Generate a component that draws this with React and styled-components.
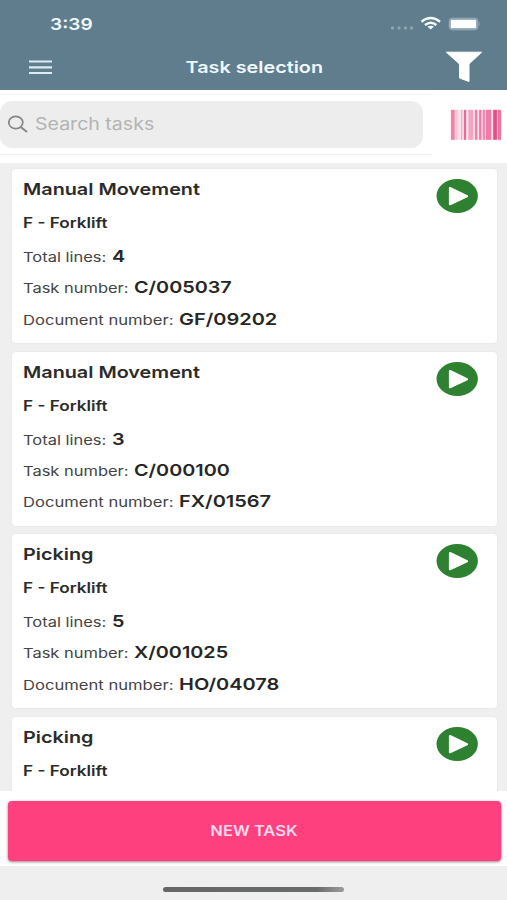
import React from "react";
import styled, { createGlobalStyle } from "styled-components";

const GlobalStyle = createGlobalStyle`
  * { box-sizing: border-box; }
  body { margin: 0; background: #efefef; font-family: Inter, "Liberation Sans", sans-serif; }
`;

const Screen = styled.div`
  width: 507px;
  height: 900px;
  display: flex;
  flex-direction: column;
  overflow: hidden;
  background: #efefef;
`;

/* Horizontally widened text */
const Wide = styled.span`
  display: inline-block;
  white-space: pre;
  transform: scaleX(${(p) => p.$x || 1.2});
  transform-origin: ${(p) => p.$origin || "left"} center;
`;

const Header = styled.header`
  height: 89.5px;
  flex: none;
  background: #607d8d;
  color: #edf8ff;
`;

const StatusBar = styled.div`
  height: 46px;
  padding: 14px 25px 0 49.5px;
  display: flex;
  justify-content: space-between;
  font-size: 16.5px;
  line-height: 20px;
  font-weight: 600;
`;

const StatusIcons = styled.svg`
  width: 94px;
  height: 20px;
  margin-top: -1px;
`;

const NavBar = styled.div`
  height: 42px;
  padding: 0 24px 0 28px;
  display: grid;
  grid-template-columns: 38px 1fr 38px;
  align-items: center;
`;

const MenuIcon = styled.svg`
  width: 25px;
  height: 16px;
  margin-top: -1px;
`;

const FilterIcon = styled.svg`
  width: 38px;
  height: 32px;
`;

const NavTitle = styled.h1`
  margin: 0 3px 0 0;
  text-align: center;
  font-size: 16.5px;
  line-height: 22px;
  font-weight: 600;
`;

const SearchRow = styled.div`
  height: 73.5px;
  flex: none;
  display: flex;
  background: #fff;
`;

const SearchFrame = styled.div`
  width: 432px;
  height: 61px;
  margin-top: 4px;
  padding: 6px 9px 8px 0;
  border-top: 1px solid #f1f1f1;
  border-bottom: 1px solid #f1f1f1;
`;

const SearchField = styled.div`
  height: 47px;
  border-radius: 12px;
  background: #ededed;
  display: flex;
  align-items: center;
  padding-left: 8px;
  gap: 7px;
  color: #b3b3b3;
  font-size: 17px;
`;

const SearchIcon = styled.svg`
  width: 20px;
  height: 18px;
`;

const Barcode = styled.svg`
  width: 52px;
  height: 32px;
  margin: 19px 0 0 18px;
`;

const List = styled.main`
  height: 628px;
  flex: none;
  overflow: hidden;
  padding: 6px 10.5px 0 11.5px;
  display: flex;
  flex-direction: column;
  gap: 8.5px;
`;

const Card = styled.article`
  height: 174px;
  flex: none;
  padding: 8px 18px 0 11.5px;
  display: flex;
  justify-content: space-between;
  background: #fff;
  border-radius: 4px;
  box-shadow: 0 0 2px rgba(0, 0, 0, 0.07);
`;

const CardText = styled.div`
  color: #2b2b2b;
`;

const TaskTitle = styled.h2`
  margin: 0;
  height: 24px;
  font-size: 16.5px;
  line-height: 24px;
  font-weight: 600;
`;

const Equipment = styled.p`
  margin: 10.2px 0 9px;
  height: 24px;
  font-size: 14px;
  line-height: 24px;
  font-weight: 600;
`;

const Detail = styled.p`
  margin: 0;
  height: 31.2px;
  display: flex;
  align-items: baseline;
  font-size: 13.5px;
  line-height: 24px;
  color: #444;
`;

const Label = styled.span`
  width: ${(p) => p.$w}px;
  flex: none;
`;

const Value = styled.strong`
  font-size: 16.5px;
  line-height: 24px;
  font-weight: 600;
  color: #262626;
`;

const PlayIcon = styled.svg`
  width: 43px;
  height: 36px;
  margin-top: 1px;
`;

const Footer = styled.footer`
  height: 74.5px;
  flex: none;
  padding: 9.5px 6.5px 0 7.5px;
  background: #fff;
`;

const NewTask = styled.button`
  width: 100%;
  height: 60.5px;
  display: block;
  padding: 0;
  border: 0;
  border-radius: 4px;
  background: #ff407f;
  color: #ffd9ec;
  font: 600 14px/60px Inter, "Liberation Sans", sans-serif;
  box-shadow: 0 1px 3px rgba(90, 0, 40, 0.55);
`;

const HomeArea = styled.div`
  flex: 1;
  display: flex;
  justify-content: center;
  padding-top: 21px;
`;

const HomeIndicator = styled.div`
  width: 181px;
  height: 5px;
  border-radius: 3px;
  background: linear-gradient(90deg, #666 0, #696b6b 85%, #9c9c9c 100%);
`;

const tasks = [
  { id: 1, title: "Manual Movement", lines: "4", number: "C/005037", doc: "GF/09202" },
  { id: 2, title: "Manual Movement", lines: "3", number: "C/000100", doc: "FX/01567" },
  { id: 3, title: "Picking", lines: "5", number: "X/001025", doc: "HO/04078" },
  { id: 4, title: "Picking" },
];

const bars = [
  [0, 3.8, "#f083a9"], [4.5, 2.2, "#fac0d5"], [7.5, 1, "#fddbe7"], [10, 1.4, "#f7a9c5"],
  [13, 2.3, "#e26f9a"], [17.5, 4.8, "#f5a3c1"], [24, 2.5, "#ea82a9"],
  [28.2, 2.4, "#ee7da7"], [31.8, 2.3, "#f08ab0"], [35, 5.3, "#ef7ba6"],
  [42.3, 3.7, "#e94b84"], [46.8, 3.4, "#f0729e"],
];

function Play() {
  return (
    <PlayIcon viewBox="0 0 43 36">
      <ellipse cx="21.2" cy="18" rx="20.7" ry="17.1" fill="#2f8132" />
      <path d="M14 10 L31 18.2 L14 26.2 Z" fill="#fff" stroke="#fff" strokeWidth="2.2" strokeLinejoin="round" />
    </PlayIcon>
  );
}

function TaskCard({ task }) {
  return (
    <Card>
      <CardText>
        <TaskTitle><Wide>{task.title}</Wide></TaskTitle>
        <Equipment><Wide $x={1.225}>F - Forklift</Wide></Equipment>
        {task.lines && (
          <>
            <Detail><Label $w={89}><Wide $x={1.22}>Total lines:</Wide></Label><Value><Wide>{task.lines}</Wide></Value></Detail>
            <Detail><Label $w={110.5}><Wide $x={1.22}>Task number:</Wide></Label><Value><Wide>{task.number}</Wide></Value></Detail>
            <Detail><Label $w={156}><Wide $x={1.23}>Document number:</Wide></Label><Value><Wide $x={1.21}>{task.doc}</Wide></Value></Detail>
          </>
        )}
      </CardText>
      <Play />
    </Card>
  );
}

export default function App() {
  return (
    <>
      <GlobalStyle />
      <Screen>
        <Header>
          <StatusBar>
            <Wide $x={1.16}>3:39</Wide>
            <StatusIcons viewBox="0 0 94 20">
              <g fill="#8ea4b0">
                <circle cx="4.5" cy="15" r="1.7" /><circle cx="11" cy="15" r="1.7" />
                <circle cx="17.5" cy="15" r="1.7" /><circle cx="23.5" cy="15" r="1.7" />
              </g>
              <g fill="none" stroke="#f2fbff" strokeWidth="2.4">
                <path d="M33.4 8.8 Q42.7 1.4 52 8.8" />
                <path d="M37 12 Q42.7 7.4 48.4 12" />
              </g>
              <path d="M39.4 13.6 Q42.7 11.8 46 13.6 L42.7 16.4 Z" fill="#f2fbff" />
              <rect x="61" y="5" width="29" height="12" rx="3" fill="#9fb2bc" stroke="#8199a6" strokeWidth="1" />
              <rect x="62.9" y="6.9" width="25" height="8.2" rx="1.2" fill="#fff" />
              <path d="M91.2 8.7 Q93.4 10.7 91.2 12.7 Z" fill="#91a7b2" />
            </StatusIcons>
          </StatusBar>
          <NavBar>
            <MenuIcon viewBox="0 0 25 16">
              <path d="M1 2.5H24M1 8.3H24M1 14H24" stroke="#dcecf5" strokeWidth="2.2" />
            </MenuIcon>
            <NavTitle><Wide $origin="center">Task selection</Wide></NavTitle>
            <FilterIcon viewBox="0 0 38 32">
              <path d="M1.3 1.2H36.7L24 13V30.5L14.5 27V13Z" fill="#fff" stroke="#fff" strokeLinejoin="round" />
            </FilterIcon>
          </NavBar>
        </Header>
        <SearchRow>
          <SearchFrame>
            <SearchField>
              <SearchIcon viewBox="0 0 20 18" fill="none" stroke="#858585" strokeWidth="1.7">
                <ellipse cx="7.8" cy="7.5" rx="7" ry="6.2" /><path d="M12.7 12L19 17" strokeWidth="2" />
              </SearchIcon>
              <Wide $x={1.15}>Search tasks</Wide>
            </SearchField>
          </SearchFrame>
          <Barcode viewBox="0 0 52 32">
            <rect x="0.9" y="0.8" width="50" height="30" fill="#fde6ee" />
            {bars.map(([x, w, c]) => <rect key={x} x={x + 0.9} y="0.8" width={w} height="30" fill={c} />)}
          </Barcode>
        </SearchRow>
        <List>{tasks.map((t) => <TaskCard key={t.id} task={t} />)}</List>
        <Footer><NewTask><Wide $x={1.18} $origin="center">NEW TASK</Wide></NewTask></Footer>
        <HomeArea><HomeIndicator /></HomeArea>
      </Screen>
    </>
  );
}
